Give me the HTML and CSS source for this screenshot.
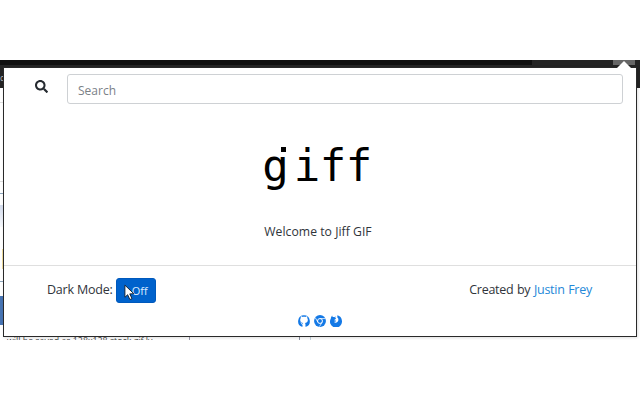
FILE: index.html
```html
<!DOCTYPE html>
<html lang="en">
<head>
<meta charset="utf-8">
<title>Jiff GIF</title>
<link rel="stylesheet" href="styles.css">
</head>
<body>
<div class="browser">
  <div class="toolbar"><span class="tab"></span><span class="extension"></span></div>
  <div class="bookmarks">d</div>
  <div class="page"><i class="line"></i><i class="line faint"></i><i class="line blue"></i><i class="badge"></i><i class="glow"></i><i class="line blue low"></i><i class="block"></i></div>
  <div class="status"><span class="filename">will be saved as 128x128 stock gif ly</span><i class="divider"></i><i class="divider second"></i></div>
  <div class="pointer"></div>
  <main class="popup">
    <form class="search">
      <svg class="search-icon" viewBox="0 0 512 512"><path fill="currentColor" d="M505 442.700 405.300 343c-4.500-4.500-10.600-7-17-7H372c27.600-35.300 44-79.700 44-128C416 93.100 322.900 0 208 0S0 93.100 0 208s93.100 208 208 208c48.300 0 92.700-16.400 128-44v16.300c0 6.400 2.500 12.500 7 17l99.700 99.700c9.400 9.400 24.600 9.400 33.900 0l28.300-28.300c9.400-9.400 9.400-24.600.1-34zM208 336c-70.700 0-128-57.200-128-128 0-70.700 57.200-128 128-128 70.700 0 128 57.200 128 128 0 70.700-57.200 128-128 128z"/></svg>
      <input type="text" placeholder="Search" aria-label="Search">
    </form>
    <section class="hero">
      <h1 class="logo"><span class="g">g</span><span class="rest">iff</span></h1>
      <p class="welcome">Welcome to Jiff GIF</p>
    </section>
    <footer>
      <div class="settings">
        <div class="mode"><span class="mode-label">Dark Mode:</span><button type="button">Off
          <svg class="cursor" viewBox="0 0 12 18"><path d="M1 1v13.200l3-2.800 2.400 5.300 2.300-1-2.400-5.200 4.400-.2z" fill="#fff" stroke="#111c2b" stroke-width="1"/></svg></button></div>
        <div class="credit">Created by <a>Justin Frey</a></div>
      </div>
      <nav class="links">
        <svg viewBox="0 0 24 24"><path fill="currentColor" fill-rule="evenodd" d="M12 .5a12 12 0 0 0-4 23.200c.8.100 1-.3 1-.8v-3.500c-1.300-.4-2.400-1.200-2.800-2.700-.4-.8-.8-1.500-1.600-1.900 1.600-.1 2.300.8 2.900 1.800.6.900 1.500 1 2.100.8.200-.7.500-1.200.8-1.500-3.900-.6-6-2.600-6-6.100 0-1.500.4-2.800 1.300-3.700-.4-1.200-.3-2.500.1-3.500 1.400-.1 2.600.7 3.500 1.300 1.800-.4 3.600-.4 5.400 0 .9-.6 2.200-1.400 3.500-1.300.5 1 .5 2.300.1 3.500.9.900 1.400 2.200 1.400 3.700 0 3.500-2.200 5.500-6 6.100.9.700 1.200 1.500 1.200 2.800v4.200c0 .5.300.9 1 .8A12 12 0 0 0 12 .5z"/></svg>
        <svg viewBox="0 0 24 24"><circle cx="12" cy="12" r="11.900" fill="currentColor"/><circle cx="12" cy="12" r="4.900" fill="none" stroke="#fff" stroke-width="2"/><path d="M12 7.100h11M7.800 14.500 2.600 5.500M16.200 14.500 11 23" fill="none" stroke="#fff" stroke-width="1.500"/></svg>
        <svg viewBox="0 0 24 24"><path fill="currentColor" d="M2.500 3.800 4.200 1l1.200 3c1.200-.3 2.300-.2 3.400.3.900-.8 1.800-1.300 3-1.500-.9 1.200-1.300 2-1.200 3.200l1.600.8c-.3 1.100-1.500 1.500-2.700 2.200l-.8 2c1.600-.2 2.800.2 3.900.8-1.300.8-2.300 2.300-4.800 1.700 1.400 2.100 4.700 2.500 6.900.6 2.800-2.500 2.500-6.700.7-8.500l-.4 1C14.800 4.600 14.400 2.500 14.800.3c4.800 1.100 8.900 5 9.100 11.300A12 12 0 1 1 1.700 7c0-1.200.2-2.300.8-3.200z"/></svg>
      </nav>
    </footer>
  </main>
</div>
</body>
</html>
```
FILE: styles.css
```css
* { box-sizing: border-box; }
body { margin: 0; width: 640px; height: 400px; overflow: hidden; background: #fff; font-family: "Open Sans", "Noto Sans", sans-serif; color: #30343a; }
.browser { position: relative; height: 280px; margin-top: 60px; overflow: hidden; background: #fff; }
.toolbar { display: flex; justify-content: space-between; height: 8px; padding-right: 5px; background: #242424; }
.tab { width: 532px; height: 5px; background: #101010; }
.extension { width: 22px; height: 5px; background: #666; }
.bookmarks { height: 20px; background: #242424; color: #bbb; font-size: 9px; line-height: 20px; }
.page { height: 249px; display: flex; flex-direction: column; align-items: flex-start; }
.line { width: 4px; height: 1px; margin-top: 14px; background: #dedede; }
.faint { margin-top: 78px; }
.blue { margin-top: 11px; background: #8ca6bd; }
.badge { width: 4px; height: 22px; margin-top: 11px; background: linear-gradient(#d4dced, #f7f9fc); }
.glow { width: 2px; height: 20px; margin: 22px 0 0 2px; background: #f1dfa0; }
.low { margin-top: 12px; }
.block { width: 4px; height: 29px; margin-top: 14px; background: #4774b3; }
.status { display: flex; height: 8px; padding-left: 7px; }
.filename { width: 183px; border-right: 1px solid #99a; font-size: 8.8px; line-height: 9px; color: #444; white-space: nowrap; }
.divider { width: 1px; margin-left: 109px; background: #8990a0; }
.second { margin-left: 10px; background: #c4d5de; }
.pointer { position: absolute; z-index: 2; top: 1px; left: 616px; width: 16px; height: 8px; background: #fff; clip-path: polygon(50% 0, 100% 100%, 0 100%); }
.popup { position: absolute; top: 7px; left: 3px; width: 634px; height: 270px; border: 1px solid #292929; background: #fff; box-shadow: 1px 1px 3px #0002; display: flex; flex-direction: column; }
.search { display: flex; padding: 6px 13px 0 31px; height: 36px; }
.search-icon { width: 13px; height: 13px; margin: 6px 19px 0 0; color: #252a30; }
input { flex: 1; min-width: 0; height: 30px; padding: 2px 9px 0 10px; border: 1px solid #ced1d4; border-radius: 3px; background: #fff; font: 12px "Open Sans", sans-serif; }
input::placeholder { color: #7b8187; opacity: 1; }
.hero { height: 161px; display: flex; flex-direction: column; align-items: center; }
.logo { display: flex; margin: 34px 0 0; padding-right: 6px; height: 56px; font: 44px/56px "DejaVu Sans Mono", monospace; color: #000; }
.rest { letter-spacing: -.5px; }
.g { position: relative; margin-right: 5px; }
.g::before { content: ""; position: absolute; top: 9px; right: 3px; width: 5px; height: 5px; background: #000; }
.welcome { margin: 28px 4px 0 0; font-size: 12.2px; line-height: 20px; letter-spacing: .03px; }
footer { height: 71px; border-top: 1px solid #dfdfdf; }
.settings { display: flex; justify-content: space-between; padding: 12px 44px 0 43px; font-size: 12.5px; line-height: 24px; }
.mode { display: flex; gap: 3px; letter-spacing: -.2px; }
.credit { letter-spacing: -.25px; word-spacing: .5px; }
button { position: relative; width: 40px; height: 25px; padding: 0 7px 0 0; border: 1px solid #0059bc; border-radius: 3px; background: #0062cc; color: #dcecff; font: 11px/24px "Open Sans", sans-serif; text-align: right; }
.cursor { position: absolute; left: 7px; top: 5px; width: 11px; height: 17px; }
a { color: #2488d8; }
.links { display: flex; justify-content: center; gap: 4px; margin-top: 12px; color: #1479e6; }
.links svg { width: 12px; height: 12px; }
```
